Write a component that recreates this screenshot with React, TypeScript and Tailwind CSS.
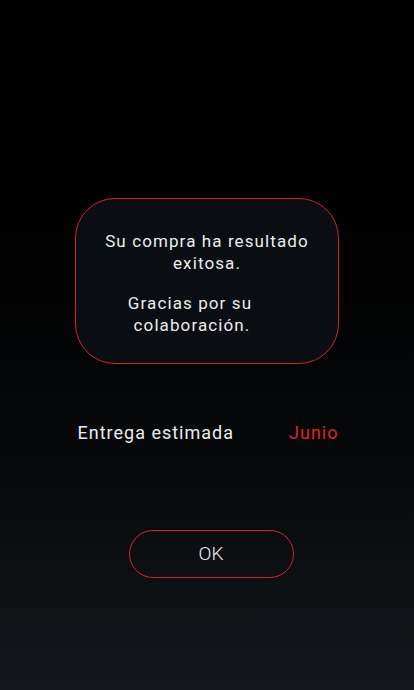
export default function App() {
  return (
    <div
      className="min-h-[690px] w-full bg-gradient-to-b from-[#000000] to-[#14181c] flex flex-col items-center"
      style={{ fontFamily: 'Roboto, "Noto Sans", sans-serif' }}
    >
      {/* Message card */}
      <div className="mt-[198px] w-[264px] h-[166px] rounded-[40px] border border-[#d3222a] bg-[#0a0d11] flex flex-col items-center justify-center text-[#ececec] text-[17px] leading-[22px] tracking-[1.1px] text-center">
        <p className="mt-[3px]">
          Su compra ha resultado
          <br />
          exitosa.
        </p>
        <p className="mt-[18px] pr-[34px]">
          Gracias por su
          <br />
          <span className="pl-[4px]">colaboración.</span>
        </p>
      </div>

      {/* Delivery row */}
      <div className="mt-[55px] ml-[2px] w-[261px] flex items-center justify-between text-[18px] tracking-[1px]">
        <span className="text-[#ececec]">Entrega estimada</span>
        <span className="text-[#e0212b]">Junio</span>
      </div>

      {/* OK button */}
      <button className="mt-[84px] ml-[8px] w-[165px] h-[48px] rounded-full border border-[#d3222a] text-[#f0f0f0] text-[19px] font-light">
        OK
      </button>
    </div>
  );
}
